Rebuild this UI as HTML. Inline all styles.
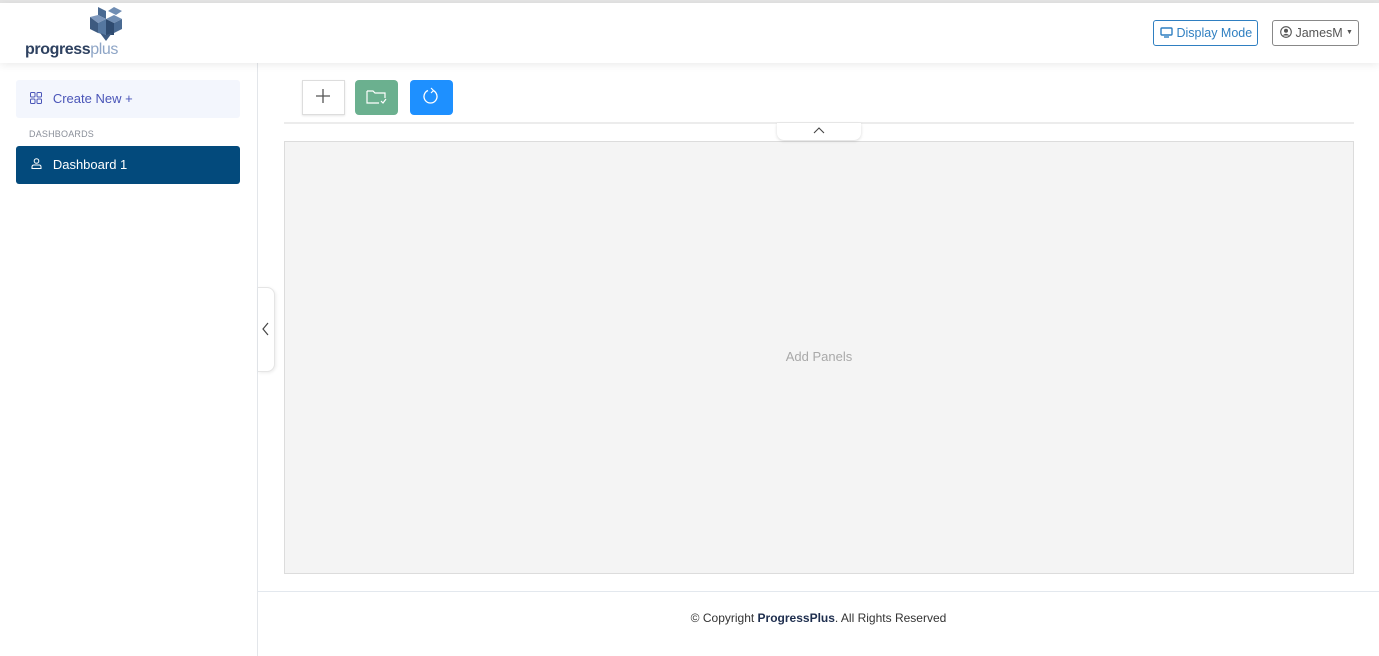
<!DOCTYPE html>
<html><head><meta charset="utf-8"><style>
*{box-sizing:border-box;margin:0;padding:0}
body{width:1379px;height:656px;overflow:hidden;background:#fff;font-family:"Liberation Sans",sans-serif;position:relative}
.abs{position:absolute}
</style></head><body>
<div class="abs" style="left:0;top:0;width:1379px;height:3px;background:#e4e4e4"></div>
<div class="abs" style="left:0;top:3px;width:1379px;height:60px;background:#fff;box-shadow:0 2px 8px rgba(0,0,0,0.08);z-index:2"></div>
<svg class="abs" style="left:86px;top:5px;z-index:3" width="40" height="40" viewBox="0 0 40 40">
<polygon points="12,2 20,6 20,14 12,10" fill="#4a6a92"/>
<polygon points="28,2 36,6 30,10 22,6" fill="#6f8db3"/>
<polygon points="4,12 12,10 20,14 12,18" fill="#7e98bd"/>
<polygon points="20,14 28,10 36,14 28,18" fill="#6f8db3"/>
<polygon points="4,12 12,18 12,28 4,24" fill="#3d5a80"/>
<polygon points="12,18 20,14 20,30 12,28" fill="#5577a0"/>
<polygon points="20,14 28,18 28,30 20,30" fill="#2f4b70"/>
<polygon points="28,18 36,14 36,24 28,28" fill="#4a6a92"/>
<polygon points="14,28 20,30 26,28 20,36" fill="#3d5a80"/>
</svg>
<div class="abs" style="left:25px;top:41px;z-index:3;font-size:16px;font-weight:bold;letter-spacing:-0.4px;color:#2e4160">progress<span style="color:#8ea5c6;font-weight:normal">plus</span></div>
<div class="abs" style="left:1153px;top:20px;width:105px;height:26px;border:1px solid #2f7fc1;border-radius:3px;z-index:3;color:#2f7fc1;font-size:12.5px;line-height:24px;padding-left:6px;white-space:nowrap">
<svg width="13" height="11" viewBox="0 0 13 11" style="vertical-align:-1px"><rect x="1" y="1" width="11" height="7" rx="1" fill="none" stroke="#2f7fc1" stroke-width="1.4"/><path d="M4 10h5" stroke="#2f7fc1" stroke-width="1.4"/></svg> Display Mode</div>
<div class="abs" style="left:1272px;top:20px;width:87px;height:26px;border:1px solid #888;border-radius:3px;z-index:3;color:#555;font-size:12.5px;line-height:24px;padding-left:7px;white-space:nowrap">
<svg width="12" height="12" viewBox="0 0 12 12" style="vertical-align:-1px"><circle cx="6" cy="6" r="5.3" fill="none" stroke="#555" stroke-width="1.1"/><circle cx="6" cy="4.8" r="2" fill="#555"/><path d="M2.5 9.5q3.5-3.5 7 0" fill="#555"/></svg> JamesM<span style="position:absolute;left:73px;top:0;font-size:7px">▼</span></div>
<div class="abs" style="left:0;top:63px;width:258px;height:593px;border-right:1px solid #e3e6ea;background:#fff"></div>
<div class="abs" style="left:16px;top:80px;width:224px;height:38px;background:#f3f6fd;border-radius:3px;color:#4a55b8;font-size:13px;line-height:38px;padding-left:14px">
<svg width="12" height="12" viewBox="0 0 12 12" style="vertical-align:-1px"><g fill="none" stroke="#4a55b8" stroke-width="1"><rect x="0.5" y="0.5" width="4.5" height="4.5" rx="1"/><rect x="7" y="0.5" width="4.5" height="4.5" rx="1"/><rect x="0.5" y="7" width="4.5" height="4.5" rx="1"/><rect x="7" y="7" width="4.5" height="4.5" rx="1"/></g></svg>&nbsp;&nbsp; Create New +</div>
<div class="abs" style="left:29px;top:129px;font-size:9px;color:#8a8f99;letter-spacing:0.2px">DASHBOARDS</div>
<div class="abs" style="left:16px;top:146px;width:224px;height:38px;background:#034a7c;border-radius:3px;color:#fff;font-size:13px;line-height:38px;padding-left:15px">
<svg width="11" height="11" viewBox="0 0 11 11" style="vertical-align:0"><circle cx="5.5" cy="3" r="2.3" fill="none" stroke="#fff"/><path d="M1 10.5v-1.5q0-2 2-2h5q2 0 2 2v1.5z" fill="none" stroke="#fff"/></svg>&nbsp;&nbsp; Dashboard 1</div>
<div class="abs" style="left:258px;top:287px;width:17px;height:85px;background:#fff;border:1px solid #e5e5e5;border-left:none;border-radius:0 8px 8px 0;box-shadow:1px 1px 3px rgba(0,0,0,0.08)"></div>
<svg class="abs" style="left:262px;top:322px" width="8" height="14" viewBox="0 0 8 14"><path d="M6 1L1 7l5 6" fill="none" stroke="#444" stroke-width="1.2"/></svg>
<div class="abs" style="left:302px;top:80px;width:43px;height:35px;border:1px solid #ddd;background:#fff;box-shadow:0 1px 2px rgba(0,0,0,0.1)"></div>
<svg class="abs" style="left:316px;top:89px" width="14" height="14"><path d="M7 0v14M0 7h14" stroke="#555" stroke-width="1.3"/></svg>
<div class="abs" style="left:355px;top:80px;width:43px;height:35px;background:#6bb08f;border-radius:4px"></div>
<svg class="abs" style="left:366px;top:88px" width="22" height="18" viewBox="0 0 22 18"><path d="M1 3v12h12M1 3h6l2 2h10v5" fill="none" stroke="#fff" stroke-width="1.2"/><path d="M15 13l2 2 3-4" fill="none" stroke="#fff" stroke-width="1.2"/></svg>
<div class="abs" style="left:410px;top:80px;width:43px;height:35px;background:#1e90ff;border-radius:4px"></div>
<svg class="abs" style="left:422px;top:87px" width="18" height="20" viewBox="0 0 18 20"><path d="M11 3.5A6.5 6.5 0 1 1 6 3.5" fill="none" stroke="#fff" stroke-width="1.3"/><path d="M9 1l2.5 2.5L9 6" fill="none" stroke="#fff" stroke-width="1.2"/></svg>
<div class="abs" style="left:284px;top:122px;width:1070px;height:2px;background:#ececec"></div>
<div class="abs" style="left:777px;top:123px;width:84px;height:17px;background:#fff;border-radius:0 0 7px 7px;box-shadow:0 1px 3px rgba(0,0,0,0.15);z-index:2"></div>
<svg class="abs" style="left:813px;top:126px;z-index:3" width="12" height="8"><path d="M1 7l5-5 5 5" fill="none" stroke="#444" stroke-width="1.1"/></svg>
<div class="abs" style="left:284px;top:141px;width:1070px;height:433px;background:#f4f4f4;border:1px solid #dcdcdc;text-align:center;line-height:430px;color:#a9a9a9;font-size:13px">Add Panels</div>
<div class="abs" style="left:258px;top:591px;width:1121px;height:1px;background:#e3e8ee"></div>
<div class="abs" style="left:258px;top:611px;width:1121px;text-align:center;font-size:12px;color:#333">© Copyright <b style="color:#1e2e4e">ProgressPlus</b>. All Rights Reserved</div>
</body></html>
